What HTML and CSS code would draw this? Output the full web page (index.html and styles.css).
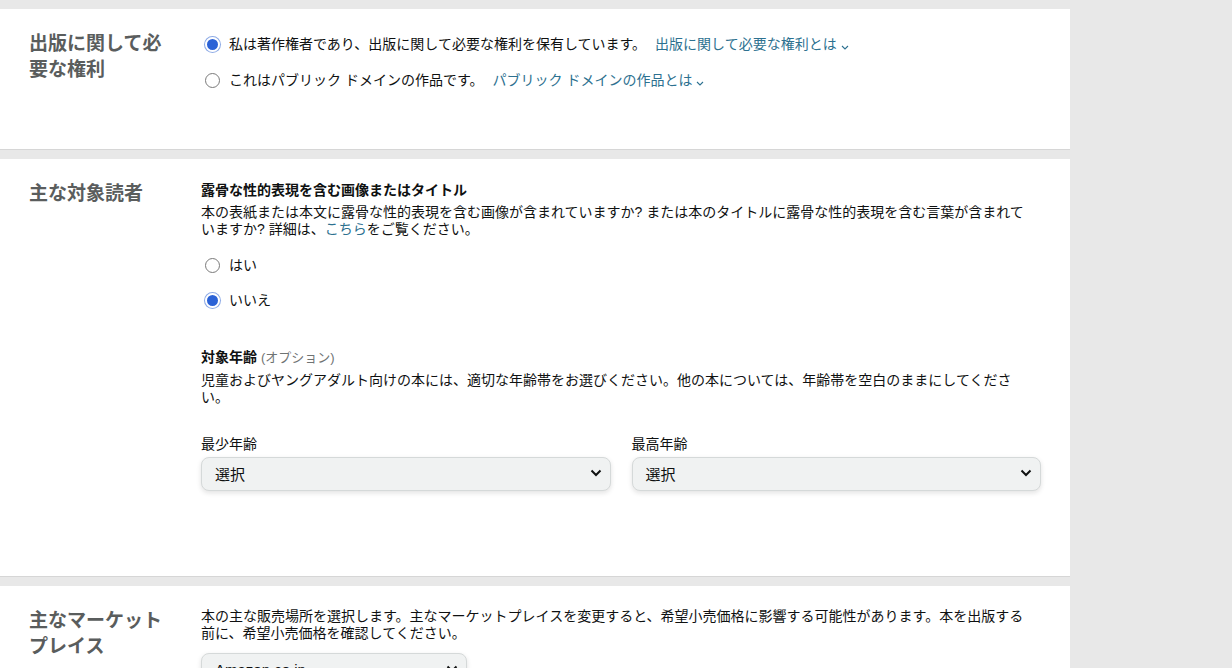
FILE: index.html
```html
<!DOCTYPE html>
<html lang="ja">
<head>
<meta charset="utf-8">
<title>KDP</title>
<link rel="stylesheet" href="styles.css">
</head>
<body>
<div class="page">
  <section class="panel p1">
    <h2 class="label">出版に関して必要な権利</h2>
    <div class="content">
      <div class="radios r1">
        <div class="radio"><span class="dot checked"></span><span>私は著作権者であり、出版に関して必要な権利を保有しています。</span><a class="link">出版に関して必要な権利とは<svg class="chev" viewBox="0 0 8 5" width="8" height="5"><path d="M1 1 L4 4 L7 1" fill="none" stroke="currentColor" stroke-width="1.1"/></svg></a></div>
        <div class="radio"><span class="dot"></span><span>これはパブリック ドメインの作品です。</span><a class="link">パブリック ドメインの作品とは<svg class="chev" viewBox="0 0 8 5" width="8" height="5"><path d="M1 1 L4 4 L7 1" fill="none" stroke="currentColor" stroke-width="1.1"/></svg></a></div>
      </div>
    </div>
  </section>

  <section class="panel p2">
    <h2 class="label">主な対象読者</h2>
    <div class="content">
      <h3 class="heading">露骨な性的表現を含む画像またはタイトル</h3>
      <p class="text">本の表紙または本文に露骨な性的表現を含む画像が含まれていますか? または本のタイトルに露骨な性的表現を含む言葉が含まれていますか? 詳細は、<a class="link">こちら</a>をご覧ください。</p>
      <div class="radios r2">
        <div class="radio"><span class="dot"></span><span>はい</span></div>
        <div class="radio"><span class="dot checked"></span><span>いいえ</span></div>
      </div>
      <h3 class="heading age">対象年齢 <span class="opt">(オプション)</span></h3>
      <p class="text">児童およびヤングアダルト向けの本には、適切な年齢帯をお選びください。他の本については、年齢帯を空白のままにしてください。</p>
      <div class="fields">
        <div class="field">
          <div class="field-label">最少年齢</div>
          <div class="select"><span>選択</span><svg class="sel-chev" viewBox="0 0 12 8" width="12" height="8"><path d="M1.5 1.5 L6 6 L10.5 1.5" fill="none" stroke="#0f1111" stroke-width="2"/></svg></div>
        </div>
        <div class="field">
          <div class="field-label">最高年齢</div>
          <div class="select"><span>選択</span><svg class="sel-chev" viewBox="0 0 12 8" width="12" height="8"><path d="M1.5 1.5 L6 6 L10.5 1.5" fill="none" stroke="#0f1111" stroke-width="2"/></svg></div>
        </div>
      </div>
    </div>
  </section>

  <section class="panel p3">
    <h2 class="label">主なマーケットプレイス</h2>
    <div class="content">
      <p class="text">本の主な販売場所を選択します。主なマーケットプレイスを変更すると、希望小売価格に影響する可能性があります。本を出版する前に、希望小売価格を確認してください。</p>
      <div class="select market"><span>Amazon.co.jp</span><svg class="sel-chev" viewBox="0 0 12 8" width="12" height="8"><path d="M1.5 1.5 L6 6 L10.5 1.5" fill="none" stroke="#0f1111" stroke-width="2"/></svg></div>
    </div>
  </section>
</div>
</body>
</html>
```

FILE: styles.css
```css
html, body {
  margin: 0;
  padding: 0;
}
body {
  background: #e8e8e8;
  font-family: "Liberation Sans", "Noto Sans CJK JP", Arial, sans-serif;
  color: #0f1111;
  font-size: 14px;
}
.page {
  width: 1070px;
  padding-top: 9px;
  display: flex;
  flex-direction: column;
  gap: 9px;
}
.panel {
  background: #fff;
  border-bottom: 1px solid #d6d6d6;
  display: grid;
  grid-template-columns: 201px 840px;
  padding-top: 22px;
}
.p1 { padding-bottom: 59px; }
.p2 { padding-bottom: 85px; }
.p3 { padding-bottom: 40px; }

.label {
  margin: 0;
  padding-left: 29px;
  width: 140px;
  font-size: 19px;
  line-height: 26px;
  font-weight: 700;
  color: #5a5d5d;
}
.p3 .label { margin-top: 0; }

.content {
  min-width: 0;
}
.p1 .content { padding-top: 3px; }

.radios {
  display: flex;
  flex-direction: column;
}
.r1 { gap: 16px; }
.r2 { gap: 15px; margin-top: 17px; }

.radio {
  display: flex;
  align-items: center;
  height: 20px;
  line-height: 20px;
  white-space: nowrap;
}
.dot {
  box-sizing: border-box;
  width: 15px;
  height: 15px;
  margin-left: 4px;
  margin-right: 9px;
  border-radius: 50%;
  border: 1px solid #7a7a7a;
  background: #fff;
  flex: none;
}
.dot.checked {
  border: 2px solid #fff;
  background: #2b62d6;
  box-shadow: 0 0 0 1px #8eabe6;
}
.link {
  color: #2d7190;
  text-decoration: none;
  cursor: pointer;
}
.radio .link { margin-left: 9px; }
.chev {
  margin-left: 4px;
  vertical-align: -1px;
}

.heading {
  margin: 0 0 5px;
  font-size: 14px;
  line-height: 18px;
  font-weight: 700;
}
.heading.age { margin-top: 38px; }
.opt {
  font-weight: 400;
  color: #6f7373;
  font-size: 13px;
}
.text {
  margin: 0;
  max-width: 832px;
  line-height: 17px;
}

.fields {
  margin-top: 29px;
  display: grid;
  grid-template-columns: 1fr 1fr;
  gap: 21px;
}
.field-label {
  line-height: 18px;
  margin-bottom: 4px;
}
.select {
  box-sizing: border-box;
  height: 34px;
  border: 1px solid #d5d9d9;
  border-radius: 8px;
  background: #f0f2f2;
  box-shadow: 0 2px 5px rgba(15, 17, 17, 0.12);
  display: flex;
  align-items: center;
  justify-content: space-between;
  padding: 0 8px 2px 13px;
  font-size: 15px;
}
.sel-chev { flex: none; }
.select.market {
  width: 266px;
  margin-top: 11px;
}
```
